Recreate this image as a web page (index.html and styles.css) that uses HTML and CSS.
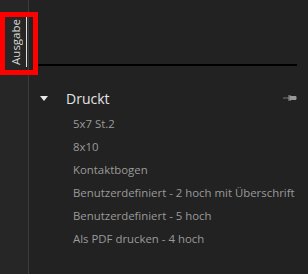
FILE: index.html
```html
<!DOCTYPE html>
<html lang="de">
<head>
    <meta charset="UTF-8">
    <title>Ausgabe</title>
    <link rel="stylesheet" href="styles.css">
</head>
<body>
    <div class="app">
        <aside class="side">
            <div class="tab">
                <span class="tab-text">Ausgabe</span>
                <span class="tab-mark"></span>
            </div>
        </aside>
        <main class="panel">
            <div class="rule"></div>
            <div class="group">
                <div class="group-head">
                    <span class="arrow"></span>
                    <span class="title">Druckt</span>
                    <svg class="pin" width="14" height="8" viewBox="0 0 14 8">
                        <path d="M0 4h6" stroke="#777" stroke-width="1"/>
                        <path d="M6 1v6M7 2h1v4H7zM8 2.5h5v3H8z" fill="#999" stroke="#999" stroke-width="1"/>
                    </svg>
                </div>
                <ul class="items">
                    <li>5x7 St.2</li>
                    <li>8x10</li>
                    <li>Kontaktbogen</li>
                    <li>Benutzerdefiniert - 2 hoch mit Überschrift</li>
                    <li>Benutzerdefiniert - 5 hoch</li>
                    <li>Als PDF drucken - 4 hoch</li>
                </ul>
            </div>
        </main>
        <div class="mark"></div>
    </div>
</body>
</html>
```

FILE: styles.css
```css
*{
    margin: 0;
    padding: 0;
}
html, body{
    width: 308px;
    height: 274px;
    overflow: hidden;
    background-color: #222222;
}
.app
{
    position: relative;
    display: flex;
    height: 274px;
    font-family: "Open Sans", "Noto Sans", sans-serif;
}
.side
{
    width: 28px;
    background-color: #262626;
    border-right: 1px solid #3c3c3c;
}
.tab
{
    display: flex;
    align-items: center;
    margin-top: 17px;
    height: 50px;
}
.tab-text
{
    writing-mode: vertical-rl;
    transform: rotate(180deg);
    font-size: 11.5px;
    color: #d8d8d8;
    margin-left: 8px;
    width: 14px;
    text-align: center;
}
.tab-mark
{
    margin-left: 4px;
    width: 1px;
    height: 50px;
    background-color: #e0e0e0;
}
.panel
{
    flex: 1;
    padding-top: 64px;
}
.rule
{
    margin-left: 9px;
    width: 259px;
    height: 2px;
    background-color: #000;
}
.group-head
{
    display: flex;
    align-items: center;
    margin-top: 22px;
    height: 20px;
    padding-left: 11px;
}
.arrow
{
    width: 0;
    height: 0;
    border-left: 4px solid transparent;
    border-right: 4px solid transparent;
    border-top: 5px solid #e8e8e8;
}
.title
{
    margin-left: 18px;
    font-size: 14px;
    color: #e4e4e4;
}
.pin
{
    margin-left: auto;
    margin-right: 11px;
}
.items
{
    list-style: none;
    margin-top: 4px;
    padding-left: 44px;
}
.items li
{
    height: 23px;
    line-height: 23px;
    font-size: 11.4px;
    color: #9a9a9a;
    white-space: nowrap;
}
.mark
{
    position: absolute;
    left: 0;
    top: 12px;
    width: 28px;
    height: 53px;
    border: 5px solid #ff0000;
}
```
